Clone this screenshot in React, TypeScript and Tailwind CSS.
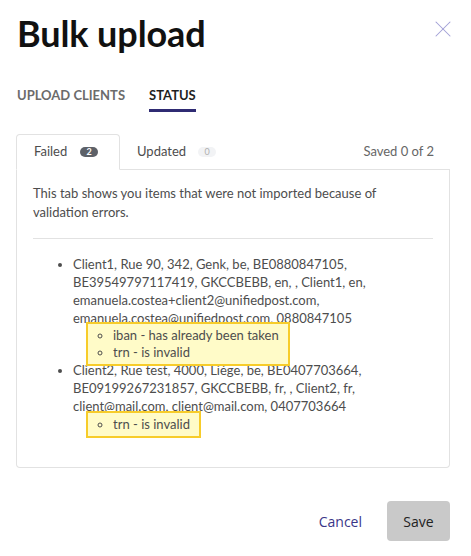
import { X } from 'lucide-react';

const FAILED = [
  {
    row: 'Client1, Rue 90, 342, Genk, be, BE0880847105, BE39549797117419, GKCCBEBB, en, , Client1, en, emanuela.costea+client2@unifiedpost.com, emanuela.costea@unifiedpost.com, 0880847105',
    errors: ['iban - has already been taken', 'trn - is invalid'],
  },
  {
    row: 'Client2, Rue test, 4000, Liège, be, BE0407703664, BE09199267231857, GKCCBEBB, fr, , Client2, fr, client@mail.com, client@mail.com, 0407703664',
    errors: ['trn - is invalid'],
  },
];

export default function App() {
  return (
    <div className="relative w-[471px] h-[556px] bg-white font-['Lato','Noto_Sans',sans-serif] text-[#4d4d4d]">
      <button className="absolute left-[429px] top-[15px] text-[#a19fd6]">
        <X className="w-[28px] h-[28px]" strokeWidth={0.9} />
      </button>

      <div className="pl-[17px] pr-[21px] pt-[11px]">
        <h1 className="text-[36px] leading-[44px] font-bold text-[#111] tracking-[-0.1px]">Bulk upload</h1>

        <div className="flex gap-[24px] mt-[30px] text-[13px] leading-[20px] font-bold uppercase">
          <div className="pb-[7px] text-[#6b6b6b]">Upload clients</div>
          <div className="pb-[4px] border-b-[3px] border-[#2f2b73] text-[#1f1f1f]">Status</div>
        </div>

        <div className="mt-[22px] -ml-px">
          <div className="flex items-end border-b border-[#e2e2e2] text-[13px]">
            <div className="flex items-center w-[104px] h-[36px] pl-[17px] -mb-px border border-[#e2e2e2] border-b-white rounded-t-[4px] bg-white">
              <span>Failed</span>
              <span className="ml-[13px] w-[18px] h-[10px] rounded-full bg-[#5d6168] text-white text-[9px] leading-[10px] text-center font-bold">2</span>
            </div>
            <div className="flex items-center h-[35px] pl-[17px]">
              <span>Updated</span>
              <span className="ml-[12px] w-[18px] h-[10px] rounded-full bg-[#f2f3f5] text-[#b0b0b0] text-[9px] leading-[10px] text-center">0</span>
            </div>
            <div className="ml-auto h-[35px] flex items-center pr-[16px] text-[#666]">Saved 0 of 2</div>
          </div>

          <div className="h-[298px] border border-t-0 border-[#e2e2e2] rounded-b-[4px] px-[16px] pt-[14px] text-[13px]">
            <p className="leading-[18.5px]">This tab shows you items that were not imported because of validation errors.</p>
            <div className="mt-[17px] mb-[16px] border-t border-[#e2e2e2]" />
            <ul className="list-disc pl-[40px] pr-[10px] leading-[18px]">
              {FAILED.map((item) => (
                <li key={item.row}>
                  {item.row}
                  <div>
                    <ul className="inline-block ml-[13px] -mt-[5px] -mb-[5px] relative py-[3px] pl-[25px] pr-[9px] bg-[#fffbc8] border-2 border-[#f7cc2a] list-[circle] leading-[17px]">
                      {item.errors.map((e) => (
                        <li key={e}>{e}</li>
                      ))}
                    </ul>
                  </div>
                </li>
              ))}
            </ul>
          </div>
        </div>

        <div className="flex justify-end items-center gap-[25px] mt-[33px] font-['Open_Sans',sans-serif] text-[14px]">
          <button className="text-[#3a3688]">Cancel</button>
          <button className="w-[63px] h-[40px] rounded-[4px] bg-[#c9c9c9] text-[#222]">Save</button>
        </div>
      </div>
    </div>
  );
}
